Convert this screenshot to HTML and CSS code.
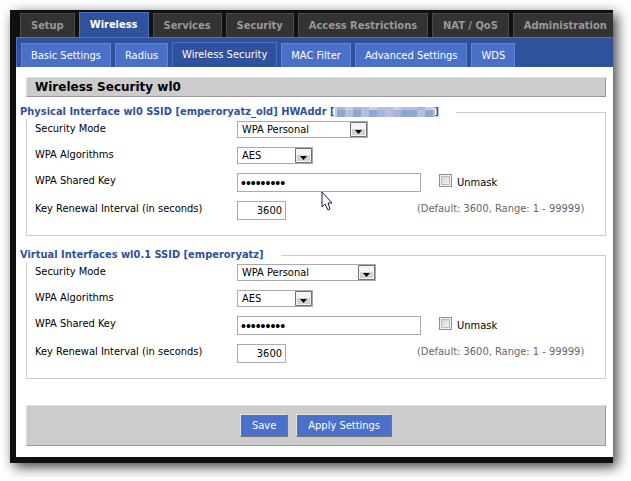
FILE: index.html
```html
<!DOCTYPE html>
<html lang="en">
<head>
  <meta charset="UTF-8">
  <title>Wireless Security</title>
  <link rel="stylesheet" href="styles.css">
</head>
<body>
  <div class="window">
    <nav class="menu">
      <a href="#">Setup</a>
      <a href="#" class="current">Wireless</a>
      <a href="#">Services</a>
      <a href="#">Security</a>
      <a href="#">Access Restrictions</a>
      <a href="#">NAT / QoS</a>
      <a href="#">Administration</a>
    </nav>
    <nav class="submenu">
      <a href="#">Basic Settings</a>
      <a href="#">Radius</a>
      <a href="#" class="current">Wireless Security</a>
      <a href="#">MAC Filter</a>
      <a href="#">Advanced Settings</a>
      <a href="#">WDS</a>
    </nav>

    <form class="content">
      <h2>Wireless Security wl0</h2>

      <fieldset>
        <legend>Physical Interface wl0 SSID [emperoryatz_old] HWAddr [<svg class="mosaic" width="100" height="10" viewBox="0 0 100 10" shape-rendering="crispEdges">
          <path fill="#b4c0dd" d="M0 0h100v10H0z"/>
          <path fill="#a5b4d8" d="M2 0h8v3H2zM18 0h8v3h-8zM82 0h8v3h-8zM42 3h8v7h-8zM58 3h8v7h-8z"/>
          <path fill="#c8d0e6" d="M0 0h2v10H0zM10 0h8v3h-8zM34 0h8v3h-8zM58 0h8v3h-8zM90 0h10v3H90z"/>
          <path fill="#8ea6d2" d="M2 3h8v7H2zM18 3h8v7h-8zM34 3h8v7h-8zM66 3h16v7H66zM90 3h8v7h-8z"/>
          <path fill="#aac4e0" d="M26 0h8v3h-8zM50 0h8v3h-8z"/>
        </svg>]</legend>
        <div class="setting">
          <label for="mode0">Security Mode</label>
          <select id="mode0" class="mode"><option>WPA Personal</option></select>
        </div>
        <div class="setting">
          <label for="algo0">WPA Algorithms</label>
          <select id="algo0" class="algo"><option>AES</option></select>
        </div>
        <div class="setting">
          <label for="key0">WPA Shared Key</label>
          <input type="password" id="key0" class="key" value="emperor12">
          <input type="checkbox" id="unmask0">
          <label for="unmask0" class="unmask">Unmask</label>
          <svg class="pointer" width="13" height="20" viewBox="0 0 13 20">
            <path d="M1 1v15l3-3 3 6 2-1-2-6h4z" fill="#fff" stroke="#1c1c30"/>
          </svg>
        </div>
        <div class="setting">
          <label for="renew0">Key Renewal Interval (in seconds)</label>
          <input type="text" id="renew0" class="num" value="3600">
          <span class="default">(Default: 3600, Range: 1 - 99999)</span>
        </div>
      </fieldset>

      <fieldset>
        <legend>Virtual Interfaces wl0.1 SSID [emperoryatz]</legend>
        <div class="setting">
          <label for="mode1">Security Mode</label>
          <select id="mode1" class="mode wide"><option>WPA Personal</option></select>
        </div>
        <div class="setting">
          <label for="algo1">WPA Algorithms</label>
          <select id="algo1" class="algo"><option>AES</option></select>
        </div>
        <div class="setting">
          <label for="key1">WPA Shared Key</label>
          <input type="password" id="key1" class="key" value="emperor12">
          <input type="checkbox" id="unmask1">
          <label for="unmask1" class="unmask">Unmask</label>
        </div>
        <div class="setting">
          <label for="renew1">Key Renewal Interval (in seconds)</label>
          <input type="text" id="renew1" class="num" value="3600">
          <span class="default">(Default: 3600, Range: 1 - 99999)</span>
        </div>
      </fieldset>

      <div class="submit-footer">
        <button type="button">Save</button>
        <button type="button">Apply Settings</button>
      </div>
    </form>
  </div>
</body>
</html>
```
FILE: styles.css
```css
* {
  box-sizing: border-box;
}

body {
  margin: 0;
  padding: 10px 18px 17px 10px;
  background: #fff;
  color: #000;
  font: 11px/16px "DejaVu Sans Condensed", "DejaVu Sans", sans-serif;
}

.window {
  background: #111;
  padding: 2px 0 6px 6px;
  box-shadow: 4px 4px 12px rgba(0, 0, 0, 0.75);
}

/* tabs */
.menu, .submenu {
  display: flex;
  align-items: flex-end;
  gap: 4px;
  overflow: hidden;
  white-space: nowrap;
}

.menu a, .submenu a {
  flex: none;
  text-decoration: none;
}

.menu {
  height: 25px;
  padding-left: 4px;
}

.menu a {
  height: 24px;
  padding: 4px 10px 0;
  background: #333;
  border: 1px solid #4a4a4a;
  border-width: 1px 1px 0;
  color: #999;
  font-weight: bold;
}

.menu a.current {
  height: 25px;
  background: #30519c;
  border-color: #4a70c9;
  color: #fff;
}

.submenu {
  height: 30px;
  padding-left: 4px;
  background: #30519c;
  border: 1px solid #4a70c9;
  border-width: 1px 0 0 1px;
}

.submenu a {
  height: 24px;
  padding: 4px 9px 0;
  background: #4a70c9;
  border: 1px solid #6584d0;
  border-width: 1px 1px 0;
  color: #fff;
}

.submenu a.current {
  height: 25px;
  background: #30519c;
  border-color: #4a70c9;
}

/* page */
.content {
  background: #fff;
  padding: 10px 7px 11px 10px;
}

h2 {
  margin: 0 0 8px;
  padding: 1px 8px;
  background: #ccc;
  border: 1px solid;
  border-color: #ddd #999 #999 #ddd;
  font: bold 12px/16px "DejaVu Sans", sans-serif;
}

fieldset {
  min-width: 0;
  margin: 0 0 12px;
  padding: 2px 8px 15px;
  border: 1px solid #ccc;
}

legend {
  margin-left: -15px;
  padding: 0 17px 0 0;
  background: #fff;
  color: #30519c;
  font-weight: bold;
  line-height: 14px;
}

.mosaic {
  vertical-align: -2px;
}

.setting {
  display: flex;
  align-items: flex-start;
  position: relative;
  margin-bottom: 9px;
}

.setting:last-child {
  margin-bottom: 0;
}

.setting label:first-child {
  flex: none;
  width: 202px;
}

input, select {
  margin: 0;
  background: #fff;
  border: 1px solid #aaa;
  border-radius: 0;
  color: #000;
  font: inherit;
}

select {
  appearance: none;
  height: 17px;
  padding: 0 20px 0 4px;
  line-height: 15px;
  background: #fff url("data:image/svg+xml,%3Csvg xmlns='http://www.w3.org/2000/svg' width='17' height='15'%3E%3Cpath d='M.5.5h16v14H.5z' fill='%23f4f4f4' stroke='%23707070'/%3E%3Cpath d='M2 7h13v6H2z' fill='%23d2d2d2'/%3E%3Cpath d='M5 8h7L8.500 12z'/%3E%3C/svg%3E") no-repeat right center;
}

.mode {
  width: 131px;
}

.wide {
  width: 139px;
}

.algo {
  width: 76px;
}

.key, .num {
  height: 19px;
  padding: 1px 3px;
}

.key {
  width: 184px;
  font: 14px "Liberation Sans", sans-serif;
}

.num {
  width: 49px;
  text-align: right;
}

input[type="checkbox"] {
  appearance: none;
  width: 13px;
  height: 13px;
  margin: 1px 5px 0 18px;
  background: linear-gradient(135deg, #c8ccd2, #f8f8f8);
  border: 1px solid #8e8f8f;
  box-shadow: inset 0 0 0 1px #f4f4f4, inset 0 0 0 2px #b8bcc2;
}

.unmask {
  padding-top: 2px;
}

.default {
  margin-left: 131px;
  color: #666;
}

.pointer {
  position: absolute;
  left: 286px;
  top: 18px;
}

.submit-footer {
  display: flex;
  justify-content: center;
  gap: 8px;
  margin-top: 26px;
  padding: 8px;
  background: #ccc;
  border: 1px solid;
  border-color: #ddd #999 #999 #ddd;
}

button {
  height: 23px;
  padding: 0 11px;
  background: #4a70c9;
  border: 1px solid;
  border-color: #e4e4e4 #777 #777 #e4e4e4;
  color: #fff;
  font: inherit;
}
```
